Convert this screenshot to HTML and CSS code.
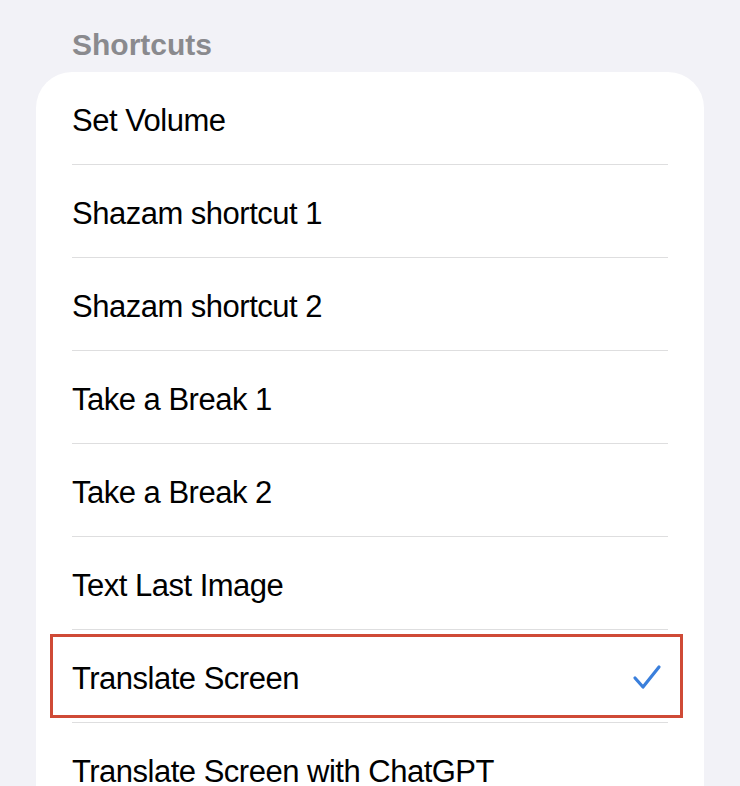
FILE: index.html
```html
<!DOCTYPE html>
<html>
<head>
<meta charset="utf-8">
<link rel="stylesheet" href="styles.css">
</head>
<body>
<div class="page">
  <div class="section-title">Shortcuts</div>
  <div class="card">
    <div class="row"><span class="label">Set Volume</span></div>
    <div class="row"><span class="label">Shazam shortcut 1</span></div>
    <div class="row"><span class="label">Shazam shortcut 2</span></div>
    <div class="row"><span class="label">Take a Break 1</span></div>
    <div class="row"><span class="label">Take a Break 2</span></div>
    <div class="row"><span class="label">Text Last Image</span></div>
    <div class="row selected">
      <span class="label">Translate Screen</span>
      <svg class="check" width="30" height="26" viewBox="0 0 30 26"><path d="M3 14 L11 23 L27 3" fill="none" stroke="#3a7fdc" stroke-width="3.2" stroke-linecap="round" stroke-linejoin="round"/></svg>
      <div class="highlight"></div>
    </div>
    <div class="row last"><span class="label">Translate Screen with ChatGPT</span></div>
  </div>
</div>
</body>
</html>
```
FILE: styles.css
```css
html, body {
  margin: 0;
  padding: 0;
  background: #f2f2f7;
  overflow: hidden;
}
.page {
  width: 740px;
  height: 786px;
  overflow: hidden;
  padding: 0 36px;
  box-sizing: border-box;
  font-family: "Liberation Sans", Arial, sans-serif;
}
.section-title {
  height: 72px;
  box-sizing: border-box;
  padding: 27px 0 0 36px;
  font-size: 30px;
  font-weight: bold;
  color: #8a8a8e;
  line-height: 36px;
}
.card {
  background: #fff;
  border-radius: 36px 36px 0 0;
  padding-left: 36px;
  height: 714px;
}
.row {
  position: relative;
  height: 93px;
  box-sizing: border-box;
  padding-top: 5px;
  border-bottom: 1px solid #dededf;
  margin-right: 36px;
  display: flex;
  align-items: center;
  justify-content: space-between;
}
.row.last {
  border-bottom: none;
}
.label {
  font-size: 31px;
  color: #000;
  letter-spacing: -0.5px;
}
.check {
  margin-right: 6px;
  margin-top: -4px;
}
.highlight {
  position: absolute;
  left: -22px;
  right: -15px;
  top: 4px;
  bottom: 4px;
  border: 3px solid #cf4a36;
  pointer-events: none;
}
```
